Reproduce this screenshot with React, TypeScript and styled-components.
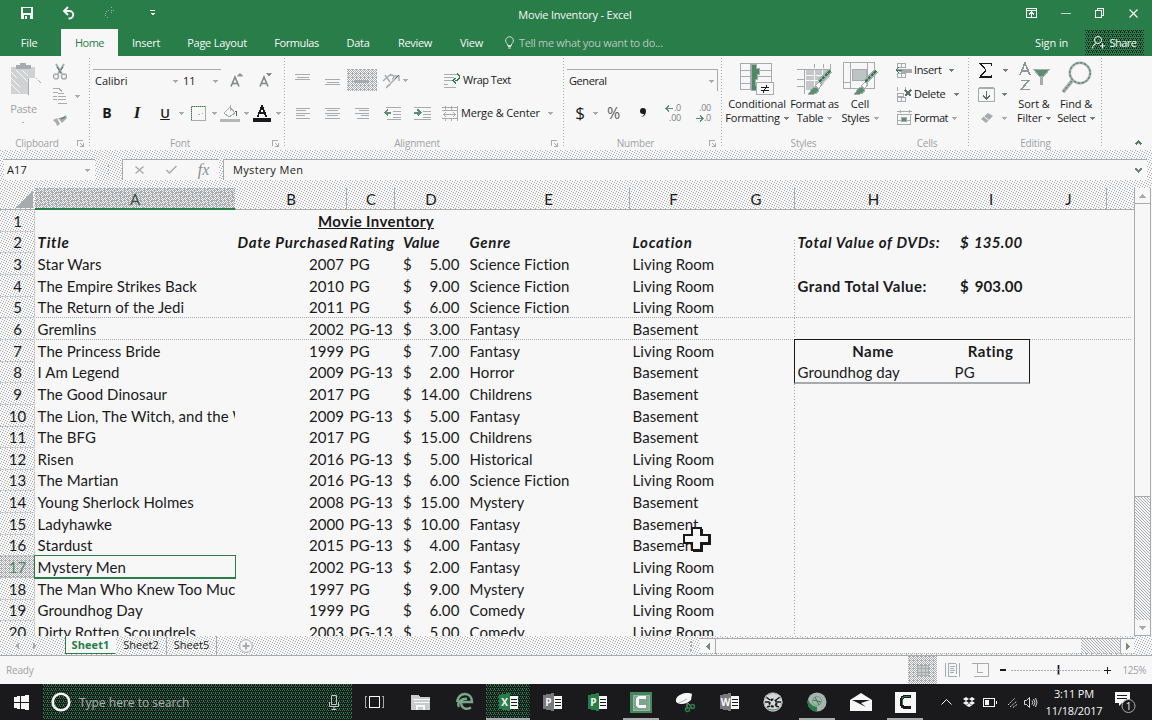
import React from "react";
import styled, { createGlobalStyle, css } from "styled-components";

const PAPER = "#f7f7f7";
const GREY = "#a8abad";
const INK = "#1a1a1c";
const GREEN = "#287d49";

/* Ordered dot texture: one pixel per listed point, repeated on a square tile. */
const dots = (color: string, size: number, points: number[][]) => css`
  background-image: ${points
    .map(() => `conic-gradient(from 270deg at 1px 1px, ${color} 90deg, transparent 0)`)
    .join(",")};
  background-size: ${size}px ${size}px;
  background-position: ${points.map(([x, y]) => `${x}px ${y}px`).join(",")};
`;
const lightDots = dots(GREY, 5, [[0, 0], [2, 1], [4, 2], [1, 3], [3, 4]]);
const midDots = dots(GREY, 3, [[0, 0], [1, 1], [2, 2]]);
const heavyDots = dots(GREY, 4, [[0, 0], [2, 0], [1, 1], [3, 1], [0, 2], [2, 2], [1, 3], [3, 3], [1, 0]]);
const searchDots = dots(GREEN, 4, [[0, 0], [2, 0], [1, 2], [3, 2], [0, 1]]);
const shareDots = dots(INK, 4, [[0, 0], [2, 0], [1, 2], [3, 2], [3, 1]]);
const hLine = `repeating-linear-gradient(90deg, ${GREY} 0 1px, transparent 1px 2px)`;
const vLine = `repeating-linear-gradient(180deg, ${GREY} 0 1px, transparent 1px 3px)`;

const Global = createGlobalStyle`
  * { box-sizing: border-box; }
  body { margin: 0; background: ${PAPER}; overflow: hidden; }
`;

const Window = styled.div`
  width: 1152px;
  height: 720px;
  display: flex;
  flex-direction: column;
  overflow: hidden;
  background: ${PAPER};
  color: ${INK};
  font: 11px/14px "Open Sans", "Noto Sans", sans-serif;
  white-space: nowrap;
`;

const Svg = styled.svg`
  display: block;
  flex: none;
  overflow: visible;
`;
type IconProps = { w: number; h: number; children: React.ReactNode; smooth?: boolean };
const Icon = ({ w, h, children, smooth }: IconProps) => (
  <Svg width={w} height={h} viewBox={`0 0 ${w} ${h}`} fill="none" stroke={GREY} shapeRendering={smooth ? "auto" : "crispEdges"}>
    {children}
  </Svg>
);

const Slot = styled.div<{ $w: number; $align?: string }>`
  width: ${(p) => p.$w}px;
  flex: none;
  display: flex;
  align-items: center;
  justify-content: ${(p) => p.$align ?? "center"};
`;
const Label = styled.span<{ $ls?: number; $size?: number }>`
  letter-spacing: ${(p) => p.$ls ?? 0}px;
  font-size: ${(p) => p.$size ?? 11}px;
`;
const Arrow = ({ color = GREY }: { color?: string }) => (
  <Icon w={5} h={3}><path d="M0 0h5v1h-1v1h-1v1h-1v-1h-1v-1h-1z" fill={color} stroke="none" /></Icon>
);

/* ---------- title bar and tabs ---------- */
const TitleBar = styled.header`
  height: 29px;
  flex: none;
  background: ${GREEN};
  color: ${PAPER};
  display: flex;
  align-items: center;
  padding: 0 0 3px 0;
`;
const Title = styled.div`
  flex: 1;
  text-align: center;
  padding: 4px 34px 0 0;
`;
const TabStrip = styled.nav`
  height: 27px;
  flex: none;
  background: ${GREEN};
  color: ${PAPER};
  display: flex;
`;
const Tab = styled.div<{ $w: number; $active?: boolean }>`
  width: ${(p) => p.$w}px;
  display: flex;
  align-items: center;
  justify-content: center;
  color: ${(p) => (p.$active ? GREEN : PAPER)};
  background: ${(p) => (p.$active ? PAPER : "transparent")};
`;
const TellMe = styled.div`
  display: flex;
  align-items: center;
  gap: 5px;
  padding-left: 9px;
  color: #b9c7bf;
  flex: 1;
`;
const SignIn = styled.div`
  width: 68px;
  padding-left: 18px;
  line-height: 28px;
  letter-spacing: -0.1px;
`;
const Share = styled.div`
  width: 59px;
  height: 25px;
  margin: 1px 8px 0 0;
  display: flex;
  align-items: center;
  justify-content: center;
  gap: 4px;
  ${shareDots}
`;

const TABS: [string, number, number][] = [
  ["Insert", 56, -0.25], ["Page Layout", 86, -0.25], ["Formulas", 73, -0.4], ["Data", 50, -0.3], ["Review", 64, -0.3], ["View", 49, -0.2],
];

const Titles = () => (
  <>
    <TitleBar>
      <Slot $w={53}>
        <Icon w={12} h={12}>
          <path d="M0 0h12v12h-12z" fill={PAPER} stroke="none" />
          <path d="M2 1h8v5h-8zM3 8h6v4h-6z" fill={GREEN} stroke="none" />
          <path d="M4 9h2v3h-2z" fill={PAPER} stroke="none" />
        </Icon>
      </Slot>
      <Slot $w={31}>
        <Icon w={12} h={12} smooth>
          <path d="M5 0L1 4l4 4M1.500 4h5a3.600 3.600 0 0 1 0 7.500h-1" stroke={PAPER} strokeWidth="1.900" />
        </Icon>
      </Slot>
      <Slot $w={52}>
        <Icon w={10} h={12}>
          <path d="M6 0l3 3-3 3M9 3h-5a3.500 3.500 0 0 0 0 8" strokeDasharray="1 1.500" />
        </Icon>
      </Slot>
      <Slot $w={32}>
        <Icon w={5} h={6}><path d="M0 .5h5" stroke={PAPER} /><path d="M0 3h5l-2.500 2.500z" fill={PAPER} stroke="none" /></Icon>
      </Slot>
      <Title><Label $ls={-0.2}>Movie Inventory - Excel</Label></Title>
      <Slot $w={30}>
        <Icon w={11} h={10}><path d="M.5 .5h10v9h-10zM0 2.500h11M5.500 9V4M3 6.500l2.500-2.500 2.500 2.500" stroke={PAPER} /></Icon>
      </Slot>
      <Slot $w={39}><Icon w={10} h={1}><path d="M0 .5h10" stroke="#c9d3cd" /></Icon></Slot>
      <Slot $w={29}><Icon w={9} h={10}><path d="M.5 2.500h6v7h-6zM2.500 2.500v-2h6v7h-2" stroke={PAPER} /></Icon></Slot>
      <Slot $w={38}><Icon w={9} h={9} smooth><path d="M.5 .5l8 8M8.500 .5l-8 8" stroke={PAPER} strokeWidth="1.200" /></Icon></Slot>
    </TitleBar>
    <TabStrip>
      <Tab $w={61}><Label $ls={-0.2}>File&nbsp;</Label></Tab>
      <Tab $w={57} $active><Label $ls={-0.5}>Home</Label></Tab>
      {TABS.map(([name, w, ls]) => <Tab key={name} $w={w}><Label $ls={ls}>{name}</Label></Tab>)}
      <TellMe>
        <Icon w={9} h={13} smooth><path d="M2.500 9.500v-1.500a3.900 3.900 0 1 1 4 0v1.500zM3 10.500h3M3 12h3" stroke="#d5ddd8" /></Icon>
        <Label $ls={-0.32}>Tell me what you want to do...</Label>
      </TellMe>
      <SignIn>Sign in</SignIn>
      <Share>
        <Icon w={13} h={13} smooth><circle cx="6" cy="4" r="3.500" stroke={PAPER} /><path d="M.5 12.500c0-3 2-4.500 4-5M8 10h5M10.500 7.500v5" stroke={PAPER} /></Icon>
        <Label $ls={-0.5}>Share</Label>
      </Share>
    </TabStrip>
  </>
);

/* ---------- ribbon ---------- */
const Ribbon = styled.section`
  height: 94px;
  flex: none;
  display: flex;
`;
const Group = styled.div<{ $w: number; $rule?: boolean }>`
  width: ${(p) => p.$w}px;
  flex: none;
  display: flex;
  flex-direction: column;
  background: ${(p) => (p.$rule === false ? "none" : `${vLine} right 2px / 1px 90px no-repeat`)};
`;
const GroupBody = styled.div<{ $top?: number; $gap?: number }>`
  height: 80px;
  padding-top: ${(p) => p.$top ?? 12}px;
  display: flex;
  flex-direction: column;
  gap: ${(p) => p.$gap ?? 9}px;
`;
const Columns = styled.div`
  height: 80px;
  display: flex;
`;
const Stack = styled.div<{ $w: number; $top: number }>`
  width: ${(p) => p.$w}px;
  flex: none;
  padding-top: ${(p) => p.$top}px;
  display: flex;
  flex-direction: column;
`;
const Line = styled.div`
  height: 24px;
  flex: none;
  display: flex;
  align-items: center;
`;
const GroupFooter = styled.div<{ $shift: number }>`
  height: 14px;
  display: flex;
  align-items: center;
  padding-left: ${(p) => p.$shift}px;
  color: #9fa2a4;
  font-size: 10px;
  letter-spacing: -0.2px;
`;
const FooterName = styled.span`
  flex: 1;
  text-align: center;
`;
const Footer = ({ name, launcher, shift = 0 }: { name: string; launcher?: boolean; shift?: number }) => (
  <GroupFooter $shift={shift}>
    <FooterName>{name}</FooterName>
    {launcher && <Slot $w={19}><Icon w={7} h={7}><path d="M.5 6V.5H6M3 3l3 3M6.500 3v3.500H3" /></Icon></Slot>}
  </GroupFooter>
);
const BigButton = styled.div<{ $w: number }>`
  width: ${(p) => p.$w}px;
  flex: none;
  padding-top: 6px;
  display: flex;
  flex-direction: column;
  align-items: center;
  letter-spacing: -0.1px;
`;
const Art = styled.div`
  height: 35px;
  display: flex;
  align-items: flex-start;
  justify-content: center;
`;
const Caption = styled.div`
  height: 14px;
  display: flex;
  align-items: center;
  gap: 4px;
`;
const PasteCaption = styled.div`
  height: 22px;
  padding-top: 5px;
  color: #9fa2a4;
  letter-spacing: -0.3px;
`;
const Combo = styled.div<{ $w: number; $edge?: boolean }>`
  width: ${(p) => p.$w}px;
  height: 22px;
  display: flex;
  align-items: center;
  justify-content: space-between;
  padding: 1px 3px 0 2px;
  border-top: 1px solid ${GREY};
  border-right: ${(p) => (p.$edge ? `1px solid ${GREY}` : "none")};
`;
const Glyph = styled.span<{ $size: number; $kind?: "i" | "u"; $color?: string; $weight?: number }>`
  font-size: ${(p) => p.$size}px;
  line-height: 18px;
  font-weight: ${(p) => p.$weight ?? 700};
  color: ${(p) => p.$color ?? INK};
  font-style: ${(p) => (p.$kind === "i" ? "italic" : "normal")};
  text-decoration: ${(p) => (p.$kind === "u" ? "underline" : "none")};
  font-family: ${(p) => (p.$kind === "i" ? '"Liberation Serif", serif' : "inherit")};
`;
const Pressed = styled.div`
  width: 30px;
  height: 22px;
  display: flex;
  align-items: center;
  justify-content: center;
  ${heavyDots}
`;
const Digits = styled.div`
  display: flex;
  flex-direction: column;
  align-items: flex-end;
  font-size: 9px;
  line-height: 10px;
  letter-spacing: -0.2px;
  color: #7e8183;
`;
const DigitLine = styled.div`
  display: flex;
  align-items: center;
  gap: 1px;
`;
const ShiftArrow = ({ flip }: { flip?: boolean }) => (
  <Icon w={7} h={5}><path d={flip ? "M0 2.500h6M4 0l3 2.500L4 5" : "M1 2.500h6M3 0L0 2.500 3 5"} stroke="#5a8f70" strokeWidth="1.500" /></Icon>
);

const Bars = ({ rows }: { rows: number[][] }) => (
  <Icon w={16} h={12}>
    {rows.map(([x, y, w], i) => <path key={i} d={`M${x} ${y + 0.5}h${w}`} />)}
  </Icon>
);
const Brush = () => (
  <>
    <path d="M33 9L22 20" stroke={GREY} strokeWidth="5" />
    <path d="M33 9L22 20" stroke={GREEN} strokeWidth="2.500" strokeDasharray="3 1" />
    <path d="M11 32c3-1 2-6 7-7l4 2c0 4-5 6-11 5z" fill="#5a8f70" stroke={GREY} />
    <path d="M18 24l4-4 3 2-3 5z" fill={PAPER} />
  </>
);
const SizedA = ({ up }: { up?: boolean }) => (
  <Icon w={13} h={15} smooth>
    <path d="M1 13.500L5 4l4 9.500M2.500 10.500h5" stroke="#7c8a83" strokeWidth="1.600" />
    <path d={up ? "M7.500 3L10 .5 12.500 3z" : "M7.500 .5L10 3 12.500 .5z"} fill="#6f8f7d" stroke="#8f9a95" />
  </Icon>
);

const RibbonBar = () => (
  <Ribbon>
    <Group $w={90}>
      <Columns>
        <BigButton $w={47}>
          <Art>
            <Icon w={26} h={34}>
              <path d="M0 5h24v11h-6v16h-18z" fill="#d0d2d3" stroke="none" />
              <path d="M5 3.500h14v3h-14zM9 3V1h5v2" fill={GREY} />
              <path d="M0 10l6 6M0 16l9 9M0 22l9 9M5 8l12 12M11 8l6 6" stroke={PAPER} />
              <path d="M17.500 17v16" /><path d="M25 16l5 5" strokeDasharray="2 1" />
            </Icon>
          </Art>
          <PasteCaption>Paste</PasteCaption>
          <Icon w={3} h={4}><path d="M0 3h2" /></Icon>
        </BigButton>
        <Stack $w={42} $top={4}>
          <Line>
            <Slot $w={26}>
              <Icon w={14} h={16} smooth>
                <path d="M3 0l6 10M11 0L5 10" strokeWidth="2" />
                <path d="M4 3l4 6M10 3l-2 3" stroke={GREEN} />
                <circle cx="3" cy="12.500" r="2.500" strokeWidth="1.400" /><circle cx="11" cy="12.500" r="2.500" strokeWidth="1.400" />
              </Icon>
            </Slot>
          </Line>
          <Line>
            <Slot $w={26}>
              <Icon w={14} h={16}><path d="M0 .5h6l3 3M0 4.500h5M0 8.500h4M0 11.500h4M5 5.500h6M5 8.500h8M5 11.500h8M5 15.500h9" /></Icon>
            </Slot>
            <Slot $w={8}><Arrow /></Slot>
          </Line>
          <Line>
            <Slot $w={26}>
              <Icon w={14} h={11} smooth>
                <path d="M0 5l4-2 3 6-3 2-1-3zM5 3l5-1 3-2 1 3-5 5z" fill={GREY} stroke="none" />
                <path d="M8 4l4-2" stroke={GREEN} />
              </Icon>
            </Slot>
          </Line>
        </Stack>
      </Columns>
      <Footer name="Clipboard" launcher shift={3} />
    </Group>

    <Group $w={195}>
      <GroupBody>
        <Line>
          <Slot $w={3} />
          <Combo $w={88}><Label>Calibri</Label><Arrow /></Combo>
          <Combo $w={40}><Label>11</Label><Arrow /></Combo>
          <Slot $w={30}><SizedA up /></Slot>
          <Slot $w={29}><SizedA /></Slot>
        </Line>
        <Line>
          <Slot $w={3} />
          <Slot $w={28}><Glyph $size={14}>B</Glyph></Slot>
          <Slot $w={32}><Glyph $size={17} $kind="i">I</Glyph></Slot>
          <Slot $w={24}><Glyph $size={13} $kind="u" $weight={600}>U</Glyph></Slot>
          <Slot $w={8}><Arrow /></Slot>
          <Slot $w={27}><Icon w={15} h={15}><path d="M.5 .5h14v14h-14z" strokeWidth="1" /><path d="M1 .5h14M.5 1v13" stroke={GREEN} strokeDasharray="1 1" /><path d="M7 8.500h2M11 7.500h1" /></Icon></Slot>
          <Slot $w={4}><Arrow /></Slot>
          <Slot $w={28}>
            <Icon w={20} h={17}>
              <path d="M4 8l6-6 5 6-6 4zM10 6V0" /><path d="M15 6c2 0 2 3 1 5" stroke={GREEN} /><path d="M0 14h20v3h-20z" fill="#b4b7b8" stroke="none" />
            </Icon>
          </Slot>
          <Slot $w={4}><Arrow /></Slot>
          <Slot $w={28}>
            <Icon w={18} h={17}>
              <path d="M4.500 12L9 1l4.500 11M6 8h6" stroke={INK} strokeWidth="1.800" /><path d="M0 12.500h18v4.500h-18z" fill={INK} stroke="none" />
            </Icon>
          </Slot>
          <Slot $w={4}><Arrow /></Slot>
        </Line>
      </GroupBody>
      <Footer name="Font" launcher shift={4} />
    </Group>

    <Group $w={279}>
      <GroupBody>
        <Line>
          <Slot $w={3} />
          <Slot $w={30}><Bars rows={[[0, 0, 15], [2, 3, 12], [0, 5, 15]]} /></Slot>
          <Slot $w={29}><Bars rows={[[0, 5, 15], [2, 8, 12], [0, 10, 15]]} /></Slot>
          <Pressed><Bars rows={[[1, 6, 13], [0, 7, 15], [1, 8, 13]]} /></Pressed>
          <Slot $w={27}>
            <Icon w={16} h={17} smooth><path d="M0 9l8-7M2 3l5 7M3 16L15 4M11 4h5v5M9 7a2 2 0 1 0-2-3M4 14l3-1" strokeWidth="1.400" /><path d="M12 7l4-4" stroke="#60706a" /></Icon>
          </Slot>
          <Slot $w={2}><Arrow /></Slot>
          <Slot $w={38} />
          <Slot $w={19} $align="flex-start">
            <Icon w={17} h={15}><path d="M0 1.500h13M0 4.500h10M0 7.500h9M0 14.500h12M0 11.500h4" /><path d="M13 1c4 1 3 7-2 6.500M12 5l-3 2.500 3 3" stroke={GREEN} strokeWidth="1.300" /></Icon>
          </Slot>
          <Label $ls={-0.5}>Wrap Text</Label>
        </Line>
        <Line>
          <Slot $w={3} />
          <Slot $w={30}><Bars rows={[[1, 1, 14], [1, 3, 10], [1, 6, 14], [1, 8, 9], [1, 11, 14]]} /></Slot>
          <Slot $w={30}><Bars rows={[[0, 1, 15], [2, 3, 11], [0, 6, 15], [2, 8, 11], [0, 11, 15]]} /></Slot>
          <Slot $w={29}><Bars rows={[[0, 1, 14], [4, 3, 10], [0, 6, 14], [6, 8, 8], [2, 11, 12]]} /></Slot>
          <Slot $w={30}>
            <Icon w={17} h={14}><path d="M2 1.500h15M9 5.500h8M9 8.500h8M3 13.500h14M9 11.500h8" /><path d="M7 6.500H1M4 3.500L1 6.500l3 3" stroke="#5a8f70" strokeWidth="2" /></Icon>
          </Slot>
          <Slot $w={30}>
            <Icon w={17} h={14}><path d="M0 1.500h17M9 5.500h8M9 8.500h8M0 13.500h17M9 11.500h8" /><path d="M0 6.500h6M3.500 3.500l3 3-3 3" stroke="#5a8f70" strokeWidth="2" /></Icon>
          </Slot>
          <Slot $w={5} />
          <Slot $w={19} $align="flex-start">
            <Icon w={16} h={15}><path d="M0 1.500h16M0 4.500h16M0 12.500h16M3.500 0v4M9.500 0v4M3.500 12v3M9.500 12v3M15.500 0v15M1.500 8.500h12M4 6l-2.500 2.500L4 11M11 6l2.500 2.500L11 11" /></Icon>
          </Slot>
          <Slot $w={85} $align="flex-start"><Label $ls={-0.15}>Merge &amp; Center</Label></Slot>
          <Slot $w={8}><Arrow /></Slot>
        </Line>
      </GroupBody>
      <Footer name="Alignment" launcher shift={4} />
    </Group>

    <Group $w={158}>
      <GroupBody>
        <Line>
          <Slot $w={3} />
          <Combo $w={151} $edge><Label $ls={-0.4}>General</Label><Arrow /></Combo>
        </Line>
        <Line>
          <Slot $w={3} />
          <Slot $w={26}><Glyph $size={17} $weight={400}>$</Glyph></Slot>
          <Slot $w={4}><Arrow /></Slot>
          <Slot $w={33}><Glyph $size={16} $weight={400} $color="#5d6062">%</Glyph></Slot>
          <Slot $w={26}><Icon w={7} h={10} smooth><path d="M1 9c3 0 5-3 5-6a3 3 0 1 0-3 3h1c0 1-1 2-3 3z" fill={INK} stroke="none" /></Icon></Slot>
          <Slot $w={35}><Digits><DigitLine><ShiftArrow />.0</DigitLine><DigitLine>.00</DigitLine></Digits></Slot>
          <Slot $w={25}><Digits><DigitLine>.00</DigitLine><DigitLine><ShiftArrow flip />.0</DigitLine></Digits></Slot>
        </Line>
      </GroupBody>
      <Footer name="Number" launcher shift={4} />
    </Group>

    <Group $w={163} $rule={false}>
      <Columns>
        <BigButton $w={70}>
          <Art>
            <Icon w={34} h={34}>
              <path d="M.5 1.500h31v26h-31zM0 8.500h31M0 14.500h31M0 21.500h31M10.500 2v26" />
              <path d="M11 2h5v4h3v6h-2v5h-2v6h2v5h-6z" fill="#4b8a64" stroke={GREY} />
              <path d="M16.500 20.500h17v12h-17z" fill={PAPER} />
              <path d="M21 25.500h8M21 28.500h8M27 23l-4 8" stroke={INK} />
            </Icon>
          </Art>
          <Caption><Label $ls={-0.1}>Conditional</Label></Caption>
          <Caption><Label $ls={-0.2}>Formatting</Label><Arrow color="#6f7f77" /></Caption>
        </BigButton>
        <BigButton $w={45}>
          <Art>
            <Icon w={36} h={34}>
              <path d="M0 7.500h34M17.500 2v4M26.500 2v4M33.500 2v8M7.500 7v25M0 17.500h7M0 24.500h7" />
              <path d="M9 8h24v6l-12 14h-12z" fill="#c4c7c8" stroke="none" />
              <path d="M9 13.500h22M9 18.500h16M17.500 8v16M25.500 8v12" stroke={PAPER} />
              <Brush />
            </Icon>
          </Art>
          <Caption><Label $ls={-0.3}>Format as</Label></Caption>
          <Caption><Label $ls={-0.3}>Table</Label><Arrow /></Caption>
        </BigButton>
        <BigButton $w={46}>
          <Art>
            <Icon w={34} h={34}>
              <path d="M.5 .5h31v26h-31zM7.500 1v26M24.500 1v22M0 20.500h7" />
              <path d="M9 7h14v11h-14z" fill="#c0c3c4" />
              <Brush />
            </Icon>
          </Art>
          <Caption>Cell</Caption>
          <Caption><Label $ls={-0.25}>Styles</Label><Arrow /></Caption>
        </BigButton>
      </Columns>
      <Footer name="Styles" />
    </Group>

    <Group $w={84}>
      <GroupBody $top={2} $gap={0}>
        <Line>
          <Slot $w={29} $align="flex-end">
            <Icon w={18} h={15}><path d="M1.500 .5h8v4h-8zM5.500 0v4M1.500 10.500h8v4h-8zM5.500 10v4" /><path d="M0 6.500h15v3h-10" fill={GREY} /><path d="M0 7h6M3 4L0 7l3 3" stroke={GREEN} /></Icon>
          </Slot>
          <Slot $w={33} $align="flex-start"><Label $ls={-0.35}>Insert</Label></Slot><Slot $w={8}><Arrow color="#6f7f77" /></Slot>
        </Line>
        <Line>
          <Slot $w={29} $align="flex-end">
            <Icon w={18} h={15}><path d="M1.500 0v4M9.500 0v4M1.500 10.500h8v4h-8zM5.500 10v4M1.500 6.500h6v3h-6z" /><path d="M9 3l6 6M15 3l-6 6" stroke="#5d746a" strokeWidth="1.500" /></Icon>
          </Slot>
          <Slot $w={38} $align="flex-start"><Label $ls={-0.3}>Delete</Label></Slot><Slot $w={8}><Arrow color="#6f7f77" /></Slot>
        </Line>
        <Line>
          <Slot $w={29} $align="flex-end">
            <Icon w={17} h={16}><path d="M0 1.500h15M0 4.500h15M3.500 0v3M12.500 0v3M.5 5v9h13v-9M0 10.500h14" /><path d="M4 7h5v4h-5z" fill="#5a8f70" stroke={GREY} /></Icon>
          </Slot>
          <Slot $w={36} $align="flex-start"><Label $ls={-0.5}>Format</Label></Slot><Slot $w={8}><Arrow /></Slot>
        </Line>
      </GroupBody>
      <Footer name="Cells" />
    </Group>

    <Group $w={133}>
      <Columns>
        <Stack $w={42} $top={2}>
          <Line>
            <Slot $w={32}><Icon w={13} h={15}><path d="M12.500 3V.5H1l6 6.500-6 7h11.500v-2" stroke={INK} strokeWidth="1.300" /></Icon></Slot>
            <Slot $w={8}><Arrow color="#6f7f77" /></Slot>
          </Line>
          <Line>
            <Slot $w={35}><Icon w={17} h={16}><path d="M.5 2.500h16v13h-16z" /><path d="M1 1h15v2h-15z" fill={GREY} stroke="none" /><path d="M8.500 5v8M5 9.500l3.500 3.500L12 9.500" stroke="#55715f" strokeWidth="1.500" /></Icon></Slot>
            <Slot $w={0}><Arrow color="#6f7f77" /></Slot>
          </Line>
          <Line>
            <Slot $w={35}><Icon w={12} h={12} smooth><path d="M0 7l7-6 5 3-7 7z" fill={GREY} stroke="none" /><path d="M3 4.500l5 4" stroke={PAPER} /></Icon></Slot>
            <Slot $w={0}><Arrow /></Slot>
          </Line>
        </Stack>
        <BigButton $w={46}>
          <Art>
            <Icon w={31} h={30}>
              <path d="M1 13L6 1l5 12M3 9h6M2 18.500h8L2 27.500h9" stroke="#8b9a92" strokeWidth="1.600" />
              <path d="M14 7h17l-7 8h-3z" fill="#5a8f70" stroke={GREY} /><path d="M22.500 14v9" strokeWidth="3" />
            </Icon>
          </Art>
          <Caption>Sort &amp;</Caption>
          <Caption>Filter<Arrow color="#6f7f77" /></Caption>
        </BigButton>
        <BigButton $w={38}>
          <Art>
            <Icon w={30} h={32} smooth>
              <circle cx="19" cy="11" r="10.200" strokeWidth="2.400" /><circle cx="19" cy="11" r="10.200" stroke={GREEN} strokeWidth="1" strokeDasharray="2 2" />
              <path d="M11 19L2 30" strokeWidth="3.600" /><path d="M11 19L2 30" stroke={GREEN} strokeDasharray="2 2" />
            </Icon>
          </Art>
          <Caption>Find &amp;</Caption>
          <Caption><Label $ls={-0.3}>Select</Label><Arrow color="#6f7f77" /></Caption>
        </BigButton>
      </Columns>
      <Footer name="Editing" />
    </Group>
    <Collapse><Icon w={7} h={5}><path d="M.5 4.500l3-3 3 3" stroke="#557a65" strokeWidth="1.500" /></Icon></Collapse>
  </Ribbon>
);
const Collapse = styled.div`
  flex: 1;
  display: flex;
  align-items: flex-end;
  justify-content: center;
  padding: 0 0 5px 22px;
`;

/* ---------- formula bar ---------- */
const FormulaBar = styled.section`
  height: 38px;
  flex: none;
  display: flex;
  padding: 9px 5px 8px 4px;
  ${lightDots}
`;
const Field = styled.div<{ $w?: number; $left?: boolean; $start?: boolean }>`
  width: ${(p) => (p.$w ? `${p.$w}px` : "auto")};
  flex: ${(p) => (p.$w ? "none" : 1)};
  background: ${PAPER};
  border-top: 1px solid ${GREY};
  border-left: ${(p) => (p.$left ? `1px solid ${GREY}` : "none")};
  display: flex;
  align-items: center;
  justify-content: ${(p) => (p.$start ? "flex-start" : "space-between")};
  padding: ${(p) => (p.$start ? "0 0 0 3px" : "0 5px 0 3px")};
`;

const Formula = () => (
  <FormulaBar>
    <Field $w={91}><Label $ls={0.1}>A17</Label><Arrow /></Field>
    <Slot $w={27}><Icon w={2} h={10}><path d="M.5 0v2M.5 4v2M.5 8v2" strokeWidth="1.500" /></Icon></Slot>
    <Field $w={97} $left $start>
      <Slot $w={26}><Icon w={9} h={8} smooth><path d="M.5 .5l8 7M8.500 .5l-8 7" strokeWidth="1.500" /></Icon></Slot>
      <Slot $w={38}><Icon w={11} h={8} smooth><path d="M.5 4l3 3 7-7" strokeWidth="1.500" /></Icon></Slot>
      <Slot $w={27}><Fx>fx</Fx></Slot>
    </Field>
    <Slot $w={4} />
    <Field $left>
      <FormulaText>Mystery Men</FormulaText>
      <Icon w={7} h={5}><path d="M.5 .5l3 3 3-3" stroke="#6c8577" strokeWidth="1.800" /></Icon>
    </Field>
  </FormulaBar>
);
const Fx = styled.span`
  font: italic 16px/18px "Liberation Serif", serif;
  color: #8b8e90;
`;
const FormulaText = styled.span`
  padding-left: 6px;
  letter-spacing: 0.35px;
`;

/* ---------- worksheet ---------- */
const COLS = "200px 112px 48px 72px 163px 87px 78px 157px 78px 77px 28px";
const Sheet = styled.main`
  height: 448px;
  flex: none;
  display: flex;
`;
const SheetArea = styled.div`
  width: 1134px;
  flex: none;
  display: flex;
  flex-direction: column;
`;
const Heads = styled.div`
  height: 22px;
  flex: none;
  display: grid;
  grid-template-columns: 35px ${COLS};
  border-bottom: 1px solid ${GREY};
  font: 15px/20px Lato, sans-serif;
  ${lightDots}
`;
const Head = styled.div<{ $on?: boolean; $tick?: boolean }>`
  text-align: center;
  padding-top: 1px;
  ${(p) => p.$on && heavyDots}
  color: ${(p) => (p.$on ? "#3d5245" : INK)};
  box-shadow: ${(p) => (p.$on ? `0 1px 0 ${GREEN}, inset 0 -1px 0 ${GREEN}` : p.$tick ? `inset -1px 0 0 ${GREY}` : "none")};
`;
const Corner = styled.div`
  display: flex;
  justify-content: flex-end;
  align-items: flex-end;
  padding: 0 2px 1px 0;
`;
const Grid = styled.div`
  position: relative;
  height: 426px;
  overflow: hidden;
  font: 15px/21px Lato, sans-serif;
  font-variant-ligatures: none;
`;
const Row = styled.div`
  height: 21.65px;
  display: grid;
  grid-template-columns: 35px ${COLS};
`;
const Num = styled.div<{ $on?: boolean }>`
  text-align: center;
  padding-top: 0.8px;
  color: ${(p) => (p.$on ? "#4f8464" : INK)};
  box-shadow: inset -1px -1px 0 rgba(168, 171, 173, 0.45);
  ${(p) => (p.$on ? heavyDots : lightDots)}
`;
const SPACING = { bi: 0.7, b: 0.48, u: 0.4 };
const Cell = styled.div<{ $look?: "bi" | "b" | "u"; $align?: string }>`
  overflow: hidden;
  padding: ${(p) => (p.$align === "right" ? "0.8px 3px 0 0" : p.$align ? "0.8px 1px 0 0" : "0.8px 0 0 2.6px")};
  text-align: ${(p) => p.$align ?? "left"};
  letter-spacing: ${(p) => (p.$look ? SPACING[p.$look] : 0.06)}px;
  font-weight: ${(p) => (p.$look ? 700 : 400)};
  font-style: ${(p) => (p.$look === "bi" ? "italic" : "normal")};
  text-decoration: ${(p) => (p.$look === "u" ? "underline" : "none")};
`;
const Heading = styled(Cell)`
  grid-column: 2 / 8;
  padding-right: 0;
`;
const Money = styled(Cell)`
  display: flex;
  justify-content: space-between;
  padding: 0.8px 7.5px 0 8px;
  letter-spacing: ${(p) => (p.$look === "bi" ? 0.25 : 0.12)}px;
`;
const Selection = styled.div`
  position: absolute;
  left: 34px;
  top: 345px;
  width: 202px;
  height: 24px;
  border: 1px solid ${GREEN};
  border-bottom-width: 2px;
`;
const BorderBox = styled.div`
  position: absolute;
  left: 794px;
  top: 129px;
  width: 236px;
  height: 45px;
  border: 1px solid ${INK};
  border-bottom: 2px solid ${GREY};
`;
const GuideRow = styled.div<{ $y: number }>`
  position: absolute;
  left: 36px;
  right: 2px;
  top: ${(p) => p.$y}px;
  height: 1px;
  background: ${hLine};
`;
const GuideColumn = styled.div`
  position: absolute;
  left: 794px;
  top: 30px;
  bottom: 0;
  width: 1px;
  background: ${vLine};
`;
const Pointer = styled.div`
  position: absolute;
  left: 683px;
  top: 316px;
`;

type Movie = [string, number, string, string, string, string];
const LR = "Living Room";
const BM = "Basement";
const MOVIES: Movie[] = [
  ["Star Wars", 2007, "PG", "5.00", "Science Fiction", LR],
  ["The Empire Strikes Back", 2010, "PG", "9.00", "Science Fiction", LR],
  ["The Return of the Jedi", 2011, "PG", "6.00", "Science Fiction", LR],
  ["Gremlins", 2002, "PG-13", "3.00", "Fantasy", BM],
  ["The Princess Bride", 1999, "PG", "7.00", "Fantasy", LR],
  ["I Am Legend", 2009, "PG-13", "2.00", "Horror", BM],
  ["The Good Dinosaur", 2017, "PG", "14.00", "Childrens", BM],
  ["The Lion, The Witch, and the Wardrobe", 2009, "PG-13", "5.00", "Fantasy", BM],
  ["The BFG", 2017, "PG", "15.00", "Childrens", BM],
  ["Risen", 2016, "PG-13", "5.00", "Historical", LR],
  ["The Martian", 2016, "PG-13", "6.00", "Science Fiction", LR],
  ["Young Sherlock Holmes", 2008, "PG-13", "15.00", "Mystery", BM],
  ["Ladyhawke", 2000, "PG-13", "10.00", "Fantasy", BM],
  ["Stardust", 2015, "PG-13", "4.00", "Fantasy", BM],
  ["Mystery Men", 2002, "PG-13", "2.00", "Fantasy", LR],
  ["The Man Who Knew Too Much", 1997, "PG", "9.00", "Mystery", LR],
  ["Groundhog Day", 1999, "PG", "6.00", "Comedy", LR],
  ["Dirty Rotten Scoundrels", 2003, "PG-13", "5.00", "Comedy", LR],
];

const sideCells = (row: number) => {
  if (row === 4) return <><Cell $look="b">Grand Total Value:</Cell><Money $look="b"><span>$</span><span>903.00</span></Money></>;
  if (row === 7) return <><Cell $look="b" $align="center">Name</Cell><Cell $look="b" $align="center">Rating</Cell></>;
  if (row === 8) return <><Cell>Groundhog day</Cell><Cell>PG</Cell></>;
  return null;
};

const Scroll = styled.div`
  width: 18px;
  display: flex;
  flex-direction: column;
  padding-right: 1px;
  border-left: 1px solid ${GREY};
`;
const ScrollPart = styled.div<{ $h: number; $track?: boolean; $line?: boolean }>`
  height: ${(p) => p.$h}px;
  flex: none;
  display: flex;
  align-items: center;
  justify-content: center;
  border-right: 1px solid ${GREY};
  border-bottom: ${(p) => (p.$line ? `1px solid ${GREY}` : "none")};
  ${(p) => p.$track && midDots}
`;

const Worksheet = () => (
  <Sheet>
    <SheetArea>
      <Heads>
        <Corner><Icon w={17} h={18}><path d="M17 0v18H0z" fill={GREY} stroke="none" /></Icon></Corner>
        {"ABCDEFGHIJ".split("").map((c) => <Head key={c} $on={c === "A"} $tick={"BCEGJ".includes(c)}>{c}</Head>)}
      </Heads>
      <Grid>
        <Row><Num>1</Num><Heading $look="u" $align="center">Movie Inventory</Heading></Row>
        <Row>
          <Num>2</Num>
          <Cell $look="bi">Title</Cell><Cell $look="bi">Date Purchased</Cell><Cell $look="bi">Rating</Cell>
          <Money $look="bi">Value</Money><Cell $look="bi">Genre</Cell><Cell $look="bi">Location</Cell><Cell />
          <Cell $look="bi">Total Value of DVDs:</Cell><Money $look="bi"><span>$</span><span>135.00</span></Money>
        </Row>
        {MOVIES.map(([title, year, rating, value, genre, place], i) => (
          <Row key={title}>
            <Num $on={i === 14}>{i + 3}</Num>
            <Cell>{title}</Cell>
            <Cell $align="right">{year}</Cell>
            <Cell>{rating}</Cell>
            <Money><span>$</span><span>{value}</span></Money>
            <Cell>{genre}</Cell>
            <Cell>{place}</Cell>
            <Cell />
            {sideCells(i + 3)}
          </Row>
        ))}
        <GuideRow $y={107} />
        <GuideRow $y={129} />
        <GuideColumn />
        <BorderBox />
        <Selection />
        <Pointer>
          <Icon w={28} h={27}>
            <path d="M9 2h9v7h8v8h-8v7h-9v-7h-8v-8h8z" fill={PAPER} stroke={INK} strokeWidth="2" />
            <path d="M19 3v6h8v9h-8v7h-9" stroke={INK} strokeWidth="2" />
          </Icon>
        </Pointer>
      </Grid>
    </SheetArea>
    <Scroll>
      <ScrollPart $h={16} $line><Icon w={7} h={4}><path d="M0 4h7L3.500 0z" fill={GREY} stroke="none" /></Icon></ScrollPart>
      <ScrollPart $h={293} $line />
      <ScrollPart $h={123} $track />
      <ScrollPart $h={16} $line><Icon w={7} h={4}><path d="M0 0h7L3.500 4z" fill={GREY} stroke="none" /></Icon></ScrollPart>
    </Scroll>
  </Sheet>
);

/* ---------- sheet tabs and status bar ---------- */
const SheetTabs = styled.div`
  height: 20px;
  flex: none;
  display: flex;
  align-items: stretch;
  border-bottom: 1px solid ${GREY};
  ${lightDots}
`;
const SheetTab = styled.div<{ $w: number; $on?: boolean }>`
  width: ${(p) => p.$w}px;
  height: 18px;
  display: flex;
  align-items: center;
  justify-content: center;
  background: ${(p) => (p.$on ? PAPER : "transparent")};
  color: ${(p) => (p.$on ? GREEN : INK)};
  font-weight: ${(p) => (p.$on ? 700 : 400)};
  border-right: 1px solid ${(p) => (p.$on ? "transparent" : GREY)};
  border-left: ${(p) => (p.$on ? `1px solid ${GREEN}` : "none")};
  border-bottom: ${(p) => (p.$on ? `1px solid ${GREEN}` : "none")};
`;
const HBar = styled.div<{ $w: number; $track?: boolean; $line?: boolean }>`
  width: ${(p) => p.$w}px;
  margin: 2px 0 1px;
  flex: none;
  display: flex;
  align-items: center;
  justify-content: center;
  background-color: ${PAPER};
  border-top: 1px solid ${GREY};
  border-bottom: 1px dotted ${GREY};
  border-left: ${(p) => (p.$line ? `1px solid ${GREY}` : "none")};
  ${(p) => p.$track && midDots}
`;
const Spacer = styled.div`
  flex: 1;
`;
const Status = styled.footer`
  height: 28px;
  flex: none;
  display: flex;
  align-items: center;
  color: #9fa2a4;
  padding: 0 6px;
`;
const ViewButton = styled.div<{ $on?: boolean }>`
  width: 29px;
  height: 28px;
  display: flex;
  align-items: center;
  justify-content: center;
  ${(p) => p.$on && heavyDots}
`;
const Bottom = () => (
  <>
    <SheetTabs>
      <Slot $w={34}><Icon w={4} h={6}><path d="M4 0v6L0 3z" fill={GREY} stroke="none" /></Icon></Slot>
      <Slot $w={2}><Icon w={4} h={6}><path d="M0 0v6l4-3z" fill={GREY} stroke="none" /></Icon></Slot>
      <Slot $w={29} />
      <SheetTab $w={51} $on><Label $ls={0.1}>Sheet1</Label></SheetTab>
      <SheetTab $w={51}><Label $ls={0}>Sheet2</Label></SheetTab>
      <SheetTab $w={50}><Label $ls={0}>Sheet5</Label></SheetTab>
      <Slot $w={57}><Icon w={14} h={14} smooth><circle cx="7" cy="7" r="6.300" fill={PAPER} /><path d="M7 3.500v7M3.500 7h7" strokeWidth="2" /></Icon></Slot>
      <Spacer />
      <Slot $w={10} $align="flex-start"><Icon w={2} h={10}><path d="M.5 0v2M.5 4v2M.5 8v2" strokeWidth="2" /></Icon></Slot>
      <HBar $w={15}><Icon w={4} h={7}><path d="M4 0v7L0 3.500z" fill="#6f8f7d" stroke="none" /></Icon></HBar>
      <HBar $w={366} $line />
      <HBar $w={39} $track />
      <HBar $w={14} $line><Icon w={4} h={7}><path d="M0 0v7l4-3.500z" fill="#6f8f7d" stroke="none" /></Icon></HBar>
      <Slot $w={18} />
    </SheetTabs>
    <Status>
      <Label $size={10} $ls={-0.2}>Ready</Label>
      <Spacer />
      <ViewButton $on><Icon w={13} h={12}><path d="M1 1h11v10h-11zM1 4.500h11M1 8h11M5 1v10M9 1v10" fill="#c8caca" /></Icon></ViewButton>
      <ViewButton><Icon w={16} h={14}><path d="M1.500 0v14M4.500 1v12M4 .5h8M12.500 1v10M15.500 0v14M4 13.500h9M6 3.500h5M6 5.500h4M6 7.500h5M6 9.500h4" /></Icon></ViewButton>
      <ViewButton><Icon w={17} h={14}><path d="M0 .5h16M16.500 0v14M2 13.500h14M5.500 0v9M5 9.500h6" /></Icon></ViewButton>
      <Slot $w={16}><Icon w={6} h={2}><path d="M0 1h6" stroke={INK} strokeWidth="1.500" /></Icon></Slot>
      <Icon w={89} h={12}>
        <path d="M0 6.500h89" strokeDasharray="2 1" />
        <path d="M46 1h3v10h-3z" fill={GREY} stroke="none" /><path d="M47.500 1v10" stroke={INK} strokeDasharray="4 1" />
      </Icon>
      <Slot $w={15}><Icon w={7} h={7}><path d="M0 3.500h7M3.500 0v7" stroke={INK} /></Icon></Slot>
      <Slot $w={31} $align="flex-end"><Label $size={10} $ls={-0.5}>125%</Label></Slot>
    </Status>
  </>
);

/* ---------- taskbar ---------- */
const Taskbar = styled.div`
  height: 36px;
  flex: none;
  display: flex;
  background-color: ${INK};
  color: ${PAPER};
`;
const Search = styled.div`
  width: 309px;
  flex: none;
  display: flex;
  align-items: center;
  color: #aab0ad;
  font-size: 12px;
  ${searchDots}
`;
const SearchText = styled.span`
  flex: 1;
  padding: 2px 0 0 8px;
`;
const TaskButton = styled.div<{ $active?: boolean }>`
  width: 44px;
  flex: none;
  display: flex;
  align-items: center;
  justify-content: center;
  ${(p) => p.$active && searchDots}
  box-shadow: ${(p) => (p.$active ? `inset 0 -2px 0 ${GREY}` : "none")};
`;
const OpenButton = styled(TaskButton)`
  background: linear-gradient(${GREY}, ${GREY}) center bottom / 36px 2px no-repeat;
`;
const Tray = styled.div`
  flex: 1;
  display: flex;
  align-items: center;
`;
const Clock = styled.div`
  width: 62px;
  text-align: center;
  line-height: 17px;
  font-size: 11px;
  letter-spacing: -0.15px;
`;
const AppLetter = ({ letter, fill }: { letter: string; fill: string }) => (
  <Icon w={19} h={18}>
    <path d="M11 3h8v13h-8z" fill={PAPER} stroke="none" />
    <path d="M12 6.500h6M12 9.500h6M12 12.500h6" stroke={INK} />
    <path d="M0 2l11-2v18l-11-2z" fill={fill} stroke="none" />
    <text x="5.500" y="13" textAnchor="middle" fill={PAPER} stroke="none" fontFamily="Open Sans" fontSize="10" fontWeight="700">{letter}</text>
  </Icon>
);
const Globe = ({ green }: { green?: boolean }) => (
  <Icon w={20} h={20} smooth>
    <circle cx="10" cy="10" r="9.500" fill={green ? "#a8b3ad" : "#d6d8d8"} stroke="none" />
    {green ? (
      <><path d="M10 19.500A9.500 9.500 0 0 1 1 7c1 3 3 7 9 8z" fill={GREEN} stroke="none" /><circle cx="10" cy="9" r="4.500" stroke="#7f9488" /><path d="M8 5l4 8M6 8l8 2" stroke={GREEN} /></>
    ) : (
      <><circle cx="10" cy="11" r="3.500" stroke={INK} strokeWidth="2" strokeDasharray="3 1.500" /><path d="M3 5l4 3M17 5l-4 3M4 15l3-1M16 15l-3-1M2 10h4M14 10h4" stroke={INK} strokeWidth="1.500" /><circle cx="10" cy="10" r="8.800" stroke={GREY} strokeWidth="1.400" strokeDasharray="4 2" /><path d="M5 17q5 2 10 0" stroke="#5a8f70" /></>
    )}
  </Icon>
);

const TaskbarView = () => (
  <Taskbar>
    <Slot $w={43}>
      <Icon w={15} h={15}><path d="M0 2l6-1v6H0zM7 1l8-1v7H7zM0 8h6v6l-6-1zM7 8h8v7l-8-1z" fill={PAPER} stroke="none" /></Icon>
    </Slot>
    <Search>
      <Slot $w={28} $align="flex-end"><Icon w={20} h={20} smooth><circle cx="10" cy="10" r="8.300" stroke={PAPER} strokeWidth="2.600" /></Icon></Slot>
      <SearchText>Type here to search</SearchText>
      <Slot $w={36}><Icon w={10} h={15} smooth><path d="M2.500 .5h5v9h-5zM.5 7v4.500h9V7M5 12v2.500M2.500 14.500h5" stroke="#c2c8c5" /></Icon></Slot>
    </Search>
    <TaskButton><Icon w={19} h={12}><path d="M4.500 .5h10v11h-10z" stroke={PAPER} /><path d="M2 .5h-1.500v11h1.500M17 .5h1.500v11h-1.500" /></Icon></TaskButton>
    <Slot $w={2} />
    <TaskButton>
      <Icon w={19} h={16}><path d="M0 1h7l2 2h10v13h-19z" fill="#c9cbcc" stroke="none" /><path d="M2 5.500h17M3 8.500h15" stroke={PAPER} /><path d="M6 16v-4h7v4" stroke={PAPER} strokeWidth="2" /></Icon>
    </TaskButton>
    <TaskButton>
      <Icon w={17} h={18} smooth><path d="M1 9c1-5 4-8 8-8s7 3 7 8H5M3 14c-3-5 4-9 8-8M5 9c0 7 6 8 10 5.500" stroke="#79a78b" strokeWidth="2.400" /></Icon>
    </TaskButton>
    <TaskButton $active><AppLetter letter="X" fill={GREEN} /></TaskButton>
    <TaskButton><AppLetter letter="P" fill="#77797b" /></TaskButton>
    <Slot $w={1} />
    <TaskButton><AppLetter letter="P" fill={GREEN} /></TaskButton>
    <OpenButton>
      <Icon w={22} h={21}><path d="M0 0h22v21h-22z" fill="#3e8a5b" stroke="none" /><path d="M3 3h16v15h-16z" stroke={GREY} fill="#7da58c" /><path d="M16 5.500h-5q-4 0-4 3.500v2q0 3.500 4 3.500h5" stroke={PAPER} strokeWidth="3" /></Icon>
    </OpenButton>
    <TaskButton>
      <Icon w={19} h={19} smooth><path d="M0 6c3-6 12-7 16-5l-1 6c-5 5-12 5-15 2z" fill={PAPER} stroke="none" /><path d="M3 10l8-4" stroke={GREY} /><path d="M11 9l5 6M11 10v6" stroke="#8fae9b" /><circle cx="16.500" cy="13.500" r="2" stroke={GREEN} strokeWidth="1.500" /><circle cx="11.500" cy="16.500" r="2" stroke={GREEN} strokeWidth="1.500" /></Icon>
    </TaskButton>
    <TaskButton><AppLetter letter="W" fill="#77797b" /></TaskButton>
    <TaskButton><Globe /></TaskButton>
    <OpenButton><Globe green /></OpenButton>
    <TaskButton>
      <Icon w={22} h={18} smooth><path d="M0 7L11 0l11 7v11H0z" fill={PAPER} stroke="none" /><path d="M2 7h18l-9 3 5 4z" fill={INK} stroke="none" /></Icon>
    </TaskButton>
    <OpenButton>
      <Icon w={21} h={21}><path d="M0 0h21v21h-21z" fill={PAPER} stroke="none" /><path d="M16 4.500h-5q-4.500 0-4.500 4v3q0 4 4.500 4h5" stroke={INK} strokeWidth="3" /><path d="M15 4.500h-4q-3.500 0-4 3v5" stroke={GREEN} /></Icon>
    </OpenButton>
    <Tray>
      <Slot $w={38}><Icon w={11} h={6} smooth><path d="M.5 5.500l5-5 5 5" stroke={PAPER} /></Icon></Slot>
      <Slot $w={7}><Icon w={12} h={10} smooth><path d="M3 0l3 2-3 2-3-2zM9 0l3 2-3 2-3-2zM3 4l3 2-3 2-3-2zM9 4l3 2-3 2-3-2zM6 6.500l3 2-3 1.500-3-1.500z" fill={PAPER} stroke="none" /></Icon></Slot>
      <Slot $w={36}><Icon w={14} h={9}><path d="M.5 .5h11v8h-11zM13 3v3" stroke={PAPER} /><path d="M2 2h4v5h-4z" fill={PAPER} stroke="none" /></Icon></Slot>
      <Slot $w={9}><Icon w={11} h={11} smooth><path d="M1 8l7-7M3 10l7-6M6 10.500l4-3" stroke="#cfd1d2" strokeDasharray="2 1" /></Icon></Slot>
      <Slot $w={26}><Icon w={13} h={11} smooth><path d="M.5 3.500h2l3-3v10l-3-3h-2zM8 3.500q1.500 2 0 4M9.500 2q3 3.500 0 7M11.500 1q3 4.500 0 9" stroke="#d8dada" /></Icon></Slot>
      <Clock>3:11 PM<br />11/18/2017</Clock>
      <Slot $w={40}>
        <Icon w={22} h={22} smooth>
          <path d="M1 1h15v11h-8l-3 3v-3h-4z" fill={PAPER} stroke="none" /><path d="M3 4.500h10M3 7.500h10" stroke={INK} />
          <circle cx="14.500" cy="15" r="6.500" fill={INK} /><text x="14.500" y="19" textAnchor="middle" fill={PAPER} stroke="none" fontFamily="Open Sans" fontSize="10">1</text>
        </Icon>
      </Slot>
    </Tray>
  </Taskbar>
);

export default function App() {
  return (
    <Window>
      <Global />
      <Titles />
      <RibbonBar />
      <Formula />
      <Worksheet />
      <Bottom />
      <TaskbarView />
    </Window>
  );
}
